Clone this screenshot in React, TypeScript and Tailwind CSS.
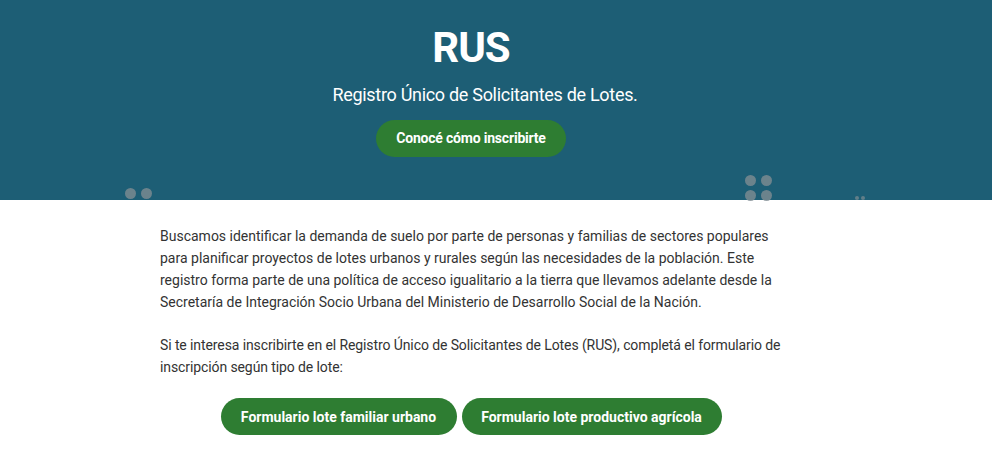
import React from 'react';

const font = { fontFamily: 'Roboto, "Open Sans", "Liberation Sans", sans-serif' };

function Dot({ className = '' }: { className?: string }) {
  return <span className={`block w-[11px] h-[11px] rounded-full bg-[#7f8c92]/80 ${className}`} />;
}

export default function App() {
  return (
    <div className="w-[992px] h-[465px] bg-white overflow-hidden" style={font}>
      {/* ── Hero ─────────────────────────────────────────────── */}
      <section className="relative h-[200px] bg-[#1d5e75]">
        <div className="ml-[160px] w-[622px] flex flex-col items-center">
          <h1 className="mt-[24px] text-[42px] leading-[48px] font-bold text-white tracking-tight">RUS</h1>
          <p className="mt-[10px] pl-[28px] text-[18px] leading-[26px] text-white tracking-[-0.3px]">
            Registro Único de Solicitantes de Lotes.
          </p>
          <button className="mt-[12px] h-[37px] w-[190px] rounded-full bg-[#2e7d32] text-white text-[14px] font-bold tracking-[-0.2px]">
            Conocé cómo inscribirte
          </button>
        </div>

        {/* decorative dots */}
        <div className="absolute left-[125px] top-[188px] flex gap-[5px]">
          <Dot />
          <Dot />
        </div>
        <div className="absolute left-[745px] top-[175px] grid grid-cols-2 gap-x-[5px] gap-y-[4px]">
          <Dot />
          <Dot />
          <Dot />
          <Dot />
        </div>
        <div className="absolute left-[855px] top-[196px] flex gap-[2px]">
          <span className="block w-[4px] h-[4px] rounded-full bg-[#7f8c92]/70" />
          <span className="block w-[4px] h-[4px] rounded-full bg-[#7f8c92]/70" />
        </div>
      </section>

      {/* ── Content ──────────────────────────────────────────── */}
      <section className="ml-[160px] w-[622px] pt-[25px] text-[#333333] text-[14px] leading-[22px]">
        <p className="whitespace-nowrap">
          Buscamos identificar la demanda de suelo por parte de personas y familias de sectores populares
          <br />
          para planificar proyectos de lotes urbanos y rurales según las necesidades de la población. Este
          <br />
          registro forma parte de una política de acceso igualitario a la tierra que llevamos adelante desde la
          <br />
          Secretaría de Integración Socio Urbana del Ministerio de Desarrollo Social de la Nación.
        </p>
        <p className="mt-[21px] whitespace-nowrap tracking-[-0.1px]">
          Si te interesa inscribirte en el Registro Único de Solicitantes de Lotes (RUS), completá el formulario de
          <br />
          inscripción según tipo de lote:
        </p>
        <div className="mt-[20px] flex justify-center gap-[5px]">
          <button className="h-[37px] w-[236px] rounded-full bg-[#2e7d32] text-white text-[14px] font-bold">
            Formulario lote familiar urbano
          </button>
          <button className="h-[37px] w-[260px] rounded-full bg-[#2e7d32] text-white text-[14px] font-bold">
            Formulario lote productivo agrícola
          </button>
        </div>
      </section>
    </div>
  );
}
